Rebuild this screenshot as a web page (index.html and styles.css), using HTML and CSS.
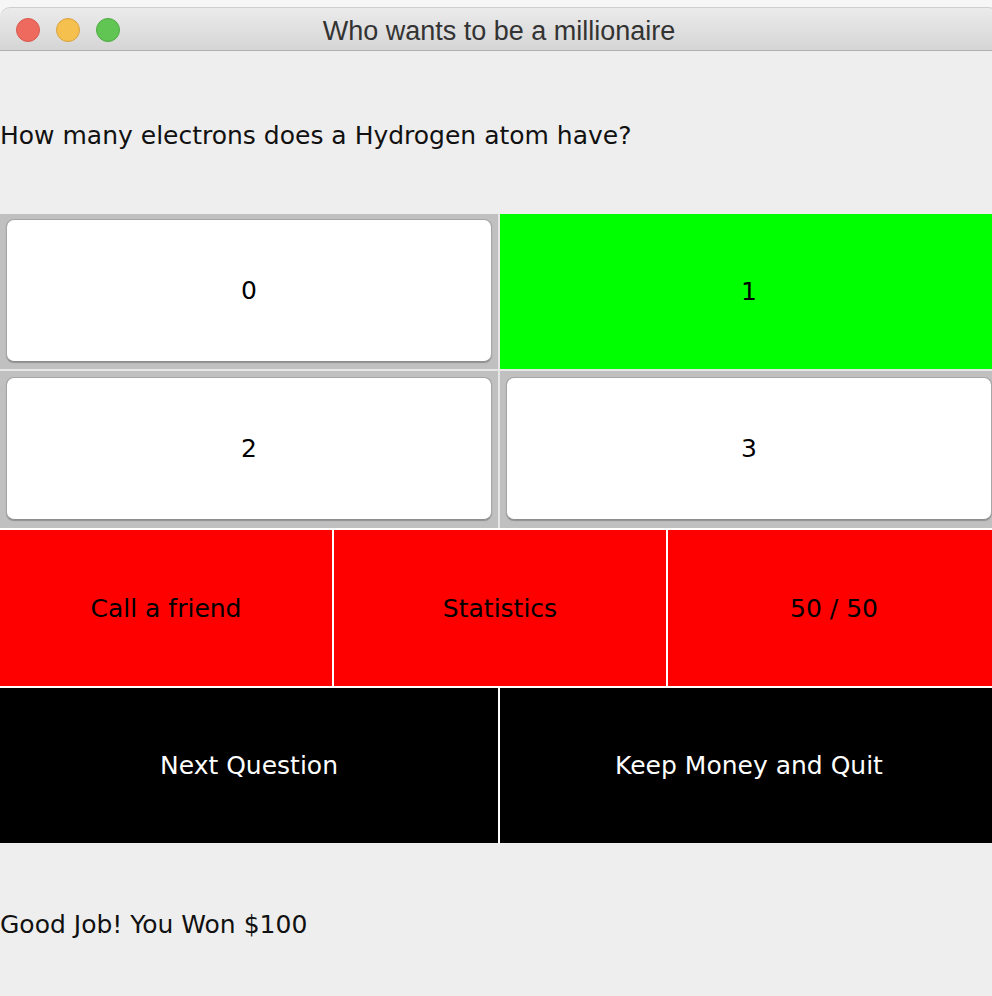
FILE: index.html
```html
<!DOCTYPE html>
<html>
<head>
<meta charset="utf-8">
<title>Who wants to be a millionaire</title>
<link rel="stylesheet" href="styles.css">
</head>
<body>
<div class="window">
  <div class="titlebar">
    <div class="lights">
      <span class="light light-red"></span>
      <span class="light light-yellow"></span>
      <span class="light light-green"></span>
    </div>
    <div class="title">Who wants to be a millionaire</div>
    <div class="spacer"></div>
  </div>
  <div class="content">
    <div class="label-panel">How many electrons does a Hydrogen atom have?</div>
    <div class="board">
      <div class="answers">
        <div class="answer-row row-1">
          <div class="answer-cell"><div class="answer-btn">0</div></div>
          <div class="answer-cell answer-correct">1</div>
        </div>
        <div class="answer-row row-2">
          <div class="answer-cell"><div class="answer-btn">2</div></div>
          <div class="answer-cell"><div class="answer-btn">3</div></div>
        </div>
      </div>
      <div class="lifelines">
        <div class="lifeline">Call a friend</div>
        <div class="lifeline">Statistics</div>
        <div class="lifeline">50 / 50</div>
      </div>
      <div class="actions">
        <div class="action">Next Question</div>
        <div class="action">Keep Money and Quit</div>
      </div>
    </div>
    <div class="label-panel label-bottom">Good Job! You Won $100</div>
  </div>
</div>
</body>
</html>
```

FILE: styles.css
```css
html, body {
  margin: 0;
  padding: 0;
}
body {
  background: #f6f6f6;
  overflow: hidden;
  font-family: "DejaVu Sans", "Liberation Sans", sans-serif;
}
.window {
  width: 998px;
  margin-top: 7px;
}
.titlebar {
  height: 42px;
  border-top: 1px solid #cfcfcf;
  border-bottom: 1px solid #b1b1b1;
  border-radius: 10px 10px 0 0;
  background: linear-gradient(#ebebeb, #d5d5d5);
  display: grid;
  grid-template-columns: 1fr auto 1fr;
  align-items: center;
}
.lights {
  display: flex;
  gap: 16px;
  padding-left: 16px;
  padding-top: 2px;
}
.light {
  width: 22px;
  height: 22px;
  border-radius: 50%;
  border: 1px solid;
  display: block;
}
.light-red { background: #ee6a5e; border-color: #d65a4e; }
.light-yellow { background: #f6c04f; border-color: #d9a23f; }
.light-green { background: #60c553; border-color: #4fab43; }
.title {
  font-family: "Liberation Sans", Arial, sans-serif;
  font-size: 27px;
  color: #333333;
  padding-top: 4px;
}
.content {
  background: #eeeeee;
}
.label-panel {
  height: 163px;
  display: flex;
  align-items: center;
  font-size: 25px;
  color: #111;
  padding-top: 5px;
  box-sizing: border-box;
}
.board {
  display: flex;
  flex-direction: column;
  gap: 2px;
  background: #ffffff;
  width: 1000px;
}
.answers {
  display: flex;
  flex-direction: column;
  gap: 2px;
  background: #e6e6e6;
}
.answer-row {
  display: grid;
  grid-template-columns: 498px 498px;
  column-gap: 2px;
}
.row-1 { height: 155px; }
.row-2 { height: 157px; }
.answer-cell {
  background: #c0c0c0;
  padding: 5px 6px 0;
  box-sizing: border-box;
  display: flex;
  flex-direction: column;
  font-size: 25px;
  color: #000;
}
.row-2 .answer-cell { padding-top: 6px; }
.answer-btn {
  height: 143px;
  box-sizing: border-box;
  background: #ffffff;
  border: 1px solid #a5a5a5;
  border-bottom-color: #8e8e8e;
  border-radius: 8px;
  box-shadow: 0 1px 1px rgba(0, 0, 0, 0.25);
  display: flex;
  align-items: center;
  justify-content: center;
}
.answer-correct {
  background: #00ff00;
  padding: 0;
  align-items: center;
  justify-content: center;
}
.lifelines {
  height: 156px;
  display: grid;
  grid-template-columns: 332px 332px 332px;
  column-gap: 2px;
}
.lifeline {
  background: #ff0000;
  color: #000;
  font-size: 25px;
  display: flex;
  align-items: center;
  justify-content: center;
}
.actions {
  height: 155px;
  display: grid;
  grid-template-columns: 498px 498px;
  column-gap: 2px;
}
.action {
  background: #000;
  color: #fff;
  font-size: 25px;
  display: flex;
  align-items: center;
  justify-content: center;
}
.label-bottom {
  padding-top: 0;
}
```
